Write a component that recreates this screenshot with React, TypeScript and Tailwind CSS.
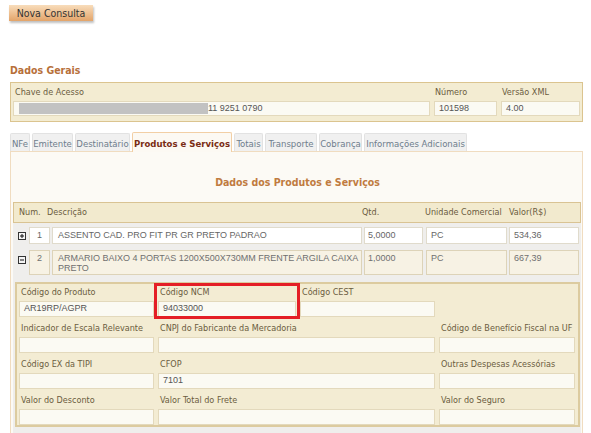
import React from "react";

const Plus = ({ minus }: { minus?: boolean }) => (
  <svg width="8" height="8" viewBox="0 0 8 8" className="block">
    <rect x="0.5" y="0.5" width="7" height="7" fill="#f4f4f4" stroke="#333" />
    <path d={minus ? "M2 4h4" : "M2 4h4M4 2v4"} stroke="#111" />
  </svg>
);

const Field = ({
  label,
  value,
  span,
  children,
}: {
  label: string;
  value?: string;
  span?: boolean;
  children?: React.ReactNode;
}) => (
  <div className={`relative flex flex-col ${span ? "col-span-2" : ""}`}>
    {children}
    <div className="h-[10px] leading-[10px] pl-[2px] text-[#6b5c40] whitespace-nowrap">{label}</div>
    <div className="mt-[4px] h-[16px] border border-[#e3d9bc] bg-[#fbfaf3] pl-[4px] flex items-center text-[#555] font-['Liberation_Sans',Arial,sans-serif] text-[9px]">
      {value}
    </div>
  </div>
);

const tabs: { t: string; w: string; active?: boolean }[] = [
  { t: "NFe", w: "w-[20px]" },
  { t: "Emitente", w: "w-[41px]" },
  { t: "Destinatário", w: "w-[55px]" },
  { t: "Produtos e Serviços", w: "w-[100px]", active: true },
  { t: "Totais", w: "w-[29px]" },
  { t: "Transporte", w: "w-[52px]" },
  { t: "Cobrança", w: "w-[43px]" },
  { t: "Informações Adicionais", w: "w-[103px]" },
];

export default function App() {
  return (
    <div className="w-[591px] h-[433px] overflow-hidden bg-white font-['DejaVu_Sans_Condensed','DejaVu_Sans',sans-serif] text-[9px] text-[#6b5c40]">
      <div className="pl-[9px] pt-[5px]">
        <button className="h-[16px] w-[84px] bg-gradient-to-b from-[#f8ddbb] to-[#e3a469] text-[#333] text-[10.5px] leading-none shadow-[1px_2px_2px_rgba(0,0,0,0.25)] flex items-center justify-center">
          Nova Consulta
        </button>
      </div>

      <div className="mt-[43px] ml-[10px] h-[12px] leading-[12px] text-[10.5px] font-bold text-[#b7703a]">Dados Gerais</div>

      <div className="mt-[6px] ml-[10px] w-[573px] h-[40px] border border-[#dbc48f] bg-[#f3ecd2] flex gap-[4px] pl-[2px] pt-[4px]">
        <div className="flex flex-col w-[417px]">
          <div className="h-[10px] leading-[10px] pl-[2px] whitespace-nowrap">Chave de Acesso</div>
          <div className="mt-[4px] h-[15px] border border-[#e3d9bc] bg-[#fbfaf3] flex items-center pl-[5px] text-[#555] font-['Liberation_Sans',Arial,sans-serif] text-[9px]">
            <span className="inline-block w-[189px] h-[11px] bg-[#c2c2c2]" />
            <span>11 9251 0790</span>
          </div>
        </div>
        <div className="flex flex-col w-[63px]">
          <div className="h-[10px] leading-[10px] pl-[1px]">Número</div>
          <div className="mt-[4px] h-[15px] border border-[#e3d9bc] bg-[#fbfaf3] flex items-center pl-[4px] text-[#555] font-['Liberation_Sans',Arial,sans-serif] text-[9px]">
            101598
          </div>
        </div>
        <div className="flex flex-col w-[79px]">
          <div className="h-[10px] leading-[10px] pl-[1px]">Versão XML</div>
          <div className="mt-[4px] h-[15px] border border-[#e3d9bc] bg-[#fbfaf3] flex items-center pl-[4px] text-[#555] font-['Liberation_Sans',Arial,sans-serif] text-[9px]">
            4.00
          </div>
        </div>
      </div>

      <div className="mt-[10px] ml-[10px] flex items-end gap-[2px] h-[19px] relative z-10">
        {tabs.map((tab) =>
          tab.active ? (
            <div
              key={tab.t}
              className={`${tab.w} h-[20px] -mb-px border border-b-0 border-[#f2cfa5] bg-[#fcf9f3] rounded-t-[2px] pt-[6px] leading-[10px] text-center text-[9.5px] font-bold text-[#7a2c14] whitespace-nowrap`}
            >
              {tab.t}
            </div>
          ) : (
            <div
              key={tab.t}
              className={`${tab.w} h-[18px] border border-b-0 border-[#e2e2e2] bg-[#f0f0f0] rounded-t-[2px] pt-[5px] leading-[10px] text-center text-[9.5px] text-[#6e7d8c] whitespace-nowrap`}
            >
              {tab.t}
            </div>
          )
        )}
      </div>

      <div className="ml-[10px] w-[573px] h-[300px] border border-[#f0dcc0] bg-[#fcfaf5] pl-[2px]">
        <div className="mt-[24px] h-[12px] leading-[12px] text-center text-[10.5px] font-bold text-[#c07b40]">
          Dados dos Produtos e Serviços
        </div>

        <div className="mt-[14px] w-[568px] h-[21px] border border-[#d9c393] bg-[#f2eace] flex items-center pl-[5px] whitespace-nowrap">
          <div className="w-[28px]">Num.</div>
          <div className="w-[315px]">Descrição</div>
          <div className="w-[63px]">Qtd.</div>
          <div className="w-[84px]">Unidade Comercial</div>
          <div>Valor(R$)</div>
        </div>

        <div className="w-[568px] bg-[#efeeec] font-['Liberation_Sans',Arial,sans-serif] text-[9px]">
          <div className="h-[25px] flex pt-[4px] pl-[5px]">
            <div className="w-[11px] pt-[5px]">
              <Plus />
            </div>
            <div className="flex text-[#666]">
              <div className="w-[21px] h-[17px] border border-[#e0dbcc] bg-white text-center pt-[2px] leading-[10px]">1</div>
              <div className="ml-[2px] w-[310px] h-[17px] border border-[#e0dbcc] bg-white pl-[5px] pt-[2px] leading-[10px]">
                ASSENTO CAD. PRO FIT PR GR PRETO PADRAO
              </div>
              <div className="ml-[2px] w-[59px] h-[17px] border border-[#e0dbcc] bg-white pl-[3px] pt-[2px] leading-[10px]">5,0000</div>
              <div className="ml-[3px] w-[81px] h-[17px] border border-[#e0dbcc] bg-white pl-[4px] pt-[2px] leading-[10px]">PC</div>
              <div className="ml-[2px] w-[70px] h-[17px] border border-[#e0dbcc] bg-white pl-[4px] pt-[2px] leading-[10px]">534,36</div>
            </div>
          </div>
          <div className="h-[30px] flex pt-[2px] pl-[5px]">
            <div className="w-[11px] pt-[6px]">
              <Plus minus />
            </div>
            <div className="flex text-[#707070]">
              <div className="w-[21px] h-[25px] border border-[#ddd3b8] bg-[#f7f2e4] text-center pt-[2px] leading-[10px]">2</div>
              <div className="ml-[2px] w-[310px] h-[25px] border border-[#ddd3b8] bg-[#f7f2e4] pl-[5px] pt-[2px] leading-[10px]">
                ARMARIO BAIXO 4 PORTAS 1200X500X730MM FRENTE ARGILA CAIXA PRETO
              </div>
              <div className="ml-[2px] w-[59px] h-[25px] border border-[#ddd3b8] bg-[#f7f2e4] pl-[3px] pt-[2px] leading-[10px]">1,0000</div>
              <div className="ml-[3px] w-[81px] h-[25px] border border-[#ddd3b8] bg-[#f7f2e4] pl-[4px] pt-[2px] leading-[10px]">PC</div>
              <div className="ml-[2px] w-[70px] h-[25px] border border-[#ddd3b8] bg-[#f7f2e4] pl-[4px] pt-[2px] leading-[10px]">667,39</div>
            </div>
          </div>
          <div className="pt-[4px] pb-[6px] pl-[2px]">
            <div className="w-[565px] h-[145px] border-2 border-[#dccb9f] bg-[#f3ecd3] pl-[2px] pt-[3px] font-['DejaVu_Sans_Condensed','DejaVu_Sans',sans-serif]">
              <div className="grid grid-cols-[135px_138px_135px_136px] gap-x-[4px] gap-y-[6px]">
                <Field label="Código do Produto" value="AR19RP/AGPR" />
                <Field label="Código NCM" value="94033000">
                  <div className="absolute -left-[4px] -top-[4px] w-[146px] h-[36px] border-[3px] border-[#e41e26] pointer-events-none" />
                </Field>
                <Field label="Código CEST" />
                <div />
                <Field label="Indicador de Escala Relevante" />
                <Field label="CNPJ do Fabricante da Mercadoria" span />
                <Field label="Código de Benefício Fiscal na UF" />
                <Field label="Código EX da TIPI" />
                <Field label="CFOP" value="7101" span />
                <Field label="Outras Despesas Acessórias" />
                <Field label="Valor do Desconto" />
                <Field label="Valor Total do Frete" span />
                <Field label="Valor do Seguro" />
              </div>
            </div>
          </div>
        </div>
      </div>
    </div>
  );
}
